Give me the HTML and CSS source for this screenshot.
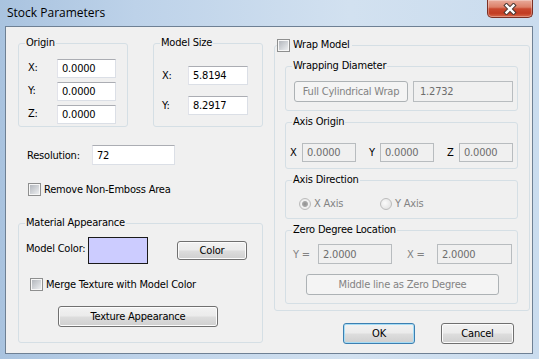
FILE: index.html
```html
<!DOCTYPE html>
<html>
<head>
    <title>Stock Parameters</title>
    <link rel="stylesheet" href="styles.css">
</head>
<body>
    <div class="window">
        <div class="titlebar">
            <span class="title">Stock Parameters</span>
            <div class="close-btn">
                <svg width="14" height="12" viewBox="0 0 14 12">
                    <path d="M3.5 2.5 L10.5 9.5 M10.5 2.5 L3.5 9.5" stroke="#4b3833" stroke-width="4.4" stroke-linecap="square"/>
                    <path d="M3.5 2.5 L10.5 9.5 M10.5 2.5 L3.5 9.5" stroke="#ffffff" stroke-width="2.4" stroke-linecap="square"/>
                </svg>
            </div>
        </div>

        <div class="client">
            <div class="col-left">
                <div class="size-row">
                    <fieldset class="group group-origin">
                        <legend>Origin</legend>
                        <div class="origin-grid">
                            <label>X:</label><input class="edit" type="text" value="0.0000">
                            <label>Y:</label><input class="edit" type="text" value="0.0000">
                            <label>Z:</label><input class="edit" type="text" value="0.0000">
                        </div>
                    </fieldset>
                    <fieldset class="group group-size">
                        <legend>Model Size</legend>
                        <div class="size-grid">
                            <label>X:</label><input class="edit" type="text" value="5.8194">
                            <label>Y:</label><input class="edit" type="text" value="8.2917">
                        </div>
                    </fieldset>
                </div>

                <div class="res-row">
                    <label>Resolution:</label>
                    <input class="edit edit-res" type="text" value="72">
                </div>

                <div class="check-row check-emboss">
                    <span class="check"></span>Remove Non-Emboss Area
                </div>

                <fieldset class="group group-material">
                    <legend>Material Appearance</legend>
                    <div class="color-row">
                        <label>Model Color:</label>
                        <div class="swatch"></div>
                        <button class="btn btn-color">Color</button>
                    </div>
                    <div class="check-row check-merge">
                        <span class="check"></span>Merge Texture with Model Color
                    </div>
                    <button class="btn btn-texture">Texture Appearance</button>
                </fieldset>
            </div>

            <div class="col-right">
                <fieldset class="group group-wrap">
                    <legend><span class="check"></span>Wrap Model</legend>
                    <div class="wrap-stack">
                        <fieldset class="group inner group-diameter">
                            <legend>Wrapping Diameter</legend>
                            <div class="diameter-row">
                                <button class="btn btn-full" disabled>Full Cylindrical Wrap</button>
                                <input class="edit edit-diameter" type="text" value="1.2732" disabled>
                            </div>
                        </fieldset>

                        <fieldset class="group inner group-axis-origin">
                            <legend>Axis Origin</legend>
                            <div class="axis-row">
                                <div class="coord"><label class="lbl-x">X</label><input class="edit edit-axis" type="text" value="0.0000" disabled></div>
                                <div class="coord"><label class="lbl-y">Y</label><input class="edit edit-axis" type="text" value="0.0000" disabled></div>
                                <div class="coord"><label class="lbl-z">Z</label><input class="edit edit-axis" type="text" value="0.0000" disabled></div>
                            </div>
                        </fieldset>

                        <fieldset class="group inner group-direction">
                            <legend>Axis Direction</legend>
                            <div class="radio-row">
                                <div class="radio-item"><span class="radio checked"></span>X Axis</div>
                                <div class="radio-item"><span class="radio"></span>Y Axis</div>
                            </div>
                        </fieldset>

                        <fieldset class="group inner group-zero">
                            <legend>Zero Degree Location</legend>
                            <div class="zero-row">
                                <label class="lbl-zy">Y =</label>
                                <input class="edit edit-zy" type="text" value="2.0000" disabled>
                                <label class="lbl-zx">X =</label>
                                <input class="edit edit-zx" type="text" value="2.0000" disabled>
                            </div>
                            <button class="btn btn-middle" disabled>Middle line as Zero Degree</button>
                        </fieldset>
                    </div>
                </fieldset>

                <div class="dialog-buttons">
                    <button class="btn btn-default">OK</button>
                    <button class="btn">Cancel</button>
                </div>
            </div>
        </div>
    </div>
</body>
</html>
```

FILE: styles.css
```css
body {
    margin: 0;
    font-family: "DejaVu Sans Condensed", "DejaVu Sans", sans-serif;
    font-size: 11px;
    letter-spacing: -0.2px;
    color: #000;
}

.window {
    width: 539px;
    height: 359px;
    display: flex;
    flex-direction: column;
    overflow: hidden;
    background: linear-gradient(to right, #a9c3df 0%, #bdd2e9 25%, #d2e1f0 65%, #cadcee 100%);
}

/* title bar */
.titlebar {
    height: 26px;
    flex-shrink: 0;
    display: flex;
    align-items: flex-start;
}

.title {
    font-family: "Open Sans", "Noto Sans", sans-serif;
    font-size: 12px;
    letter-spacing: 0;
    line-height: 16px;
    padding: 5px 0 0 7px;
}

.close-btn {
    margin-left: auto;
    margin-right: 6px;
    width: 46px;
    height: 18px;
    box-sizing: border-box;
    border: 1px solid #7b3024;
    border-top: none;
    border-radius: 0 0 5px 5px;
    background: linear-gradient(#e9ab9b 0%, #dc8068 42%, #c9492f 52%, #c23c22 78%, #d8694b 100%);
    box-shadow: inset 0 0 0 1px rgba(255, 255, 255, 0.3);
    display: flex;
    align-items: center;
    justify-content: center;
}

/* client area */
.client {
    flex: 1;
    min-height: 0;
    margin: 0 6px 5px 5px;
    padding: 9px 0 0 12px;
    background: #f0f0f0;
    border: 1px solid #6e8094;
    display: grid;
    grid-template-columns: 245px 256px;
    column-gap: 11px;
    align-items: start;
}

/* group boxes */
.group {
    margin: 0;
    padding: 0 6px;
    min-width: 0;
    box-sizing: border-box;
    border: 1px solid #d5dfe5;
    border-radius: 3px;
}

.group legend {
    padding: 0 1px;
    line-height: 14px;
    height: 14px;
}

label {
    line-height: 13px;
}

/* text boxes */
.edit {
    box-sizing: border-box;
    height: 19px;
    margin: 0;
    padding: 0 4px;
    font: inherit;
    letter-spacing: inherit;
    color: #000;
    background: #fff;
    border: 1px solid #dbdfe6;
    border-top-color: #abadb3;
    border-left-color: #e2e3ea;
    outline: none;
}

.edit:disabled {
    background: #f0f0f0;
    border-color: #b8bcbf;
    color: #6d6d6d;
}

/* push buttons */
.btn {
    box-sizing: border-box;
    height: 21px;
    margin: 0;
    padding: 0;
    font: inherit;
    letter-spacing: inherit;
    color: #000;
    border: 1px solid #707070;
    border-radius: 3px;
    background: linear-gradient(#f2f2f2 0%, #ebebeb 48%, #dddddd 52%, #cfcfcf 100%);
    box-shadow: inset 0 0 0 1px #fcfcfc;
}

.btn:disabled {
    border-color: #adb2b5;
    background: #f4f4f4;
    color: #838383;
    box-shadow: none;
}

.btn-default {
    border-color: #3c7fb1;
    box-shadow: inset 0 0 0 1px #a6dcf5;
}

/* check boxes and radios */
.check {
    flex-shrink: 0;
    width: 13px;
    height: 13px;
    box-sizing: border-box;
    border: 1px solid #8e8f8f;
    background: linear-gradient(135deg, #b3b7bd, #eceef0) center / 9px 9px no-repeat, #f7f7f7;
}

.check-row {
    display: flex;
    align-items: center;
    gap: 3px;
    height: 13px;
}

.radio {
    flex-shrink: 0;
    width: 12px;
    height: 12px;
    box-sizing: border-box;
    border-radius: 50%;
    border: 1px solid #bcbcbc;
    background: radial-gradient(circle at 40% 40%, #fbfbfb, #dcdcdc);
}

.radio.checked {
    background: radial-gradient(circle, #8f8f8f 0, #a9a9a9 2.5px, #f2f2f2 3.5px, #dedede 100%);
}

/* left column */
.size-row {
    display: flex;
    justify-content: space-between;
}

.group-origin,
.group-size {
    width: 110px;
    height: 91px;
}

.group-origin {
    padding-top: 9px;
}

.origin-grid {
    display: grid;
    grid-template-columns: 32px 59px;
    row-gap: 4px;
}

.origin-grid label {
    padding: 2px 0 0 3px;
}

.group-size {
    padding-top: 16px;
}

.size-grid {
    display: grid;
    grid-template-columns: 28px 60px;
    row-gap: 11px;
}

.size-grid label {
    padding: 3px 0 0 2px;
}

.res-row {
    display: flex;
    align-items: center;
    margin-top: 18px;
    padding-left: 9px;
}

.res-row label {
    width: 65px;
}

.edit-res {
    width: 83px;
    height: 20px;
}

.check-emboss {
    margin-top: 18px;
    padding-left: 10px;
}

.group-material {
    margin-top: 20px;
    height: 127px;
    padding-top: 7px;
}

.color-row {
    display: flex;
    align-items: flex-start;
}

.color-row label {
    width: 63px;
    padding: 5px 0 0 1px;
    box-sizing: border-box;
}

.swatch {
    width: 60px;
    height: 27px;
    box-sizing: border-box;
    border: 1px solid #1a1a1a;
    background: #ccccff;
}

.btn-color {
    width: 70px;
    height: 19px;
    margin: 4px 0 0 29px;
}

.check-merge {
    margin-top: 14px;
    padding-left: 5px;
}

.btn-texture {
    display: block;
    width: 160px;
    margin: 15px 0 0 33px;
}

/* right column */
.col-right {
    margin-top: 2px;
    display: flex;
    flex-direction: column;
}

.group-wrap {
    height: 273px;
    padding: 7px 11px 0 2px;
}

.group-wrap > legend {
    display: flex;
    align-items: center;
    gap: 3px;
    padding: 0 2px 0 0;
}

.wrap-stack {
    margin-left: 8px;
    display: flex;
    flex-direction: column;
    gap: 4px;
}

.group.inner {
    padding: 0 0 0 6px;
}

.group-diameter {
    height: 52px;
}

.diameter-row {
    display: flex;
    padding: 8px 0 0 2px;
}

.btn-full {
    width: 114px;
}

.edit-diameter {
    width: 100px;
    height: 21px;
    margin-left: 5px;
    padding-left: 6px;
}

.group-axis-origin {
    height: 54px;
}

.axis-row {
    display: flex;
    gap: 13px;
    padding-top: 14px;
    margin-left: -2px;
}

.coord {
    display: flex;
    align-items: center;
}

.coord label {
    width: 12px;
}

.coord .lbl-y {
    width: 11px;
}

.edit-axis {
    width: 54px;
}

.group-direction {
    height: 46px;
}

.radio-row {
    display: flex;
    padding: 10px 0 0 7px;
    color: #838383;
}

.radio-item {
    width: 81px;
    display: flex;
    align-items: center;
    gap: 3px;
    line-height: 13px;
}

.group-zero {
    height: 81px;
}

.zero-row {
    display: flex;
    align-items: center;
    padding: 7px 0 0 1px;
    color: #838383;
}

.lbl-zy {
    width: 25px;
}

.edit-zy {
    width: 74px;
    height: 20px;
}

.lbl-zx {
    width: 30px;
    margin-left: 15px;
}

.edit-zx {
    width: 75px;
    height: 20px;
}

.btn-middle {
    display: block;
    width: 193px;
    height: 21px;
    margin: 10px 0 0 14px;
}

.dialog-buttons {
    display: flex;
    justify-content: flex-end;
    gap: 26px;
    margin-top: 12px;
    padding-right: 16px;
}

.dialog-buttons .btn {
    width: 72px;
}

.dialog-buttons .btn + .btn {
    width: 73px;
}
```
